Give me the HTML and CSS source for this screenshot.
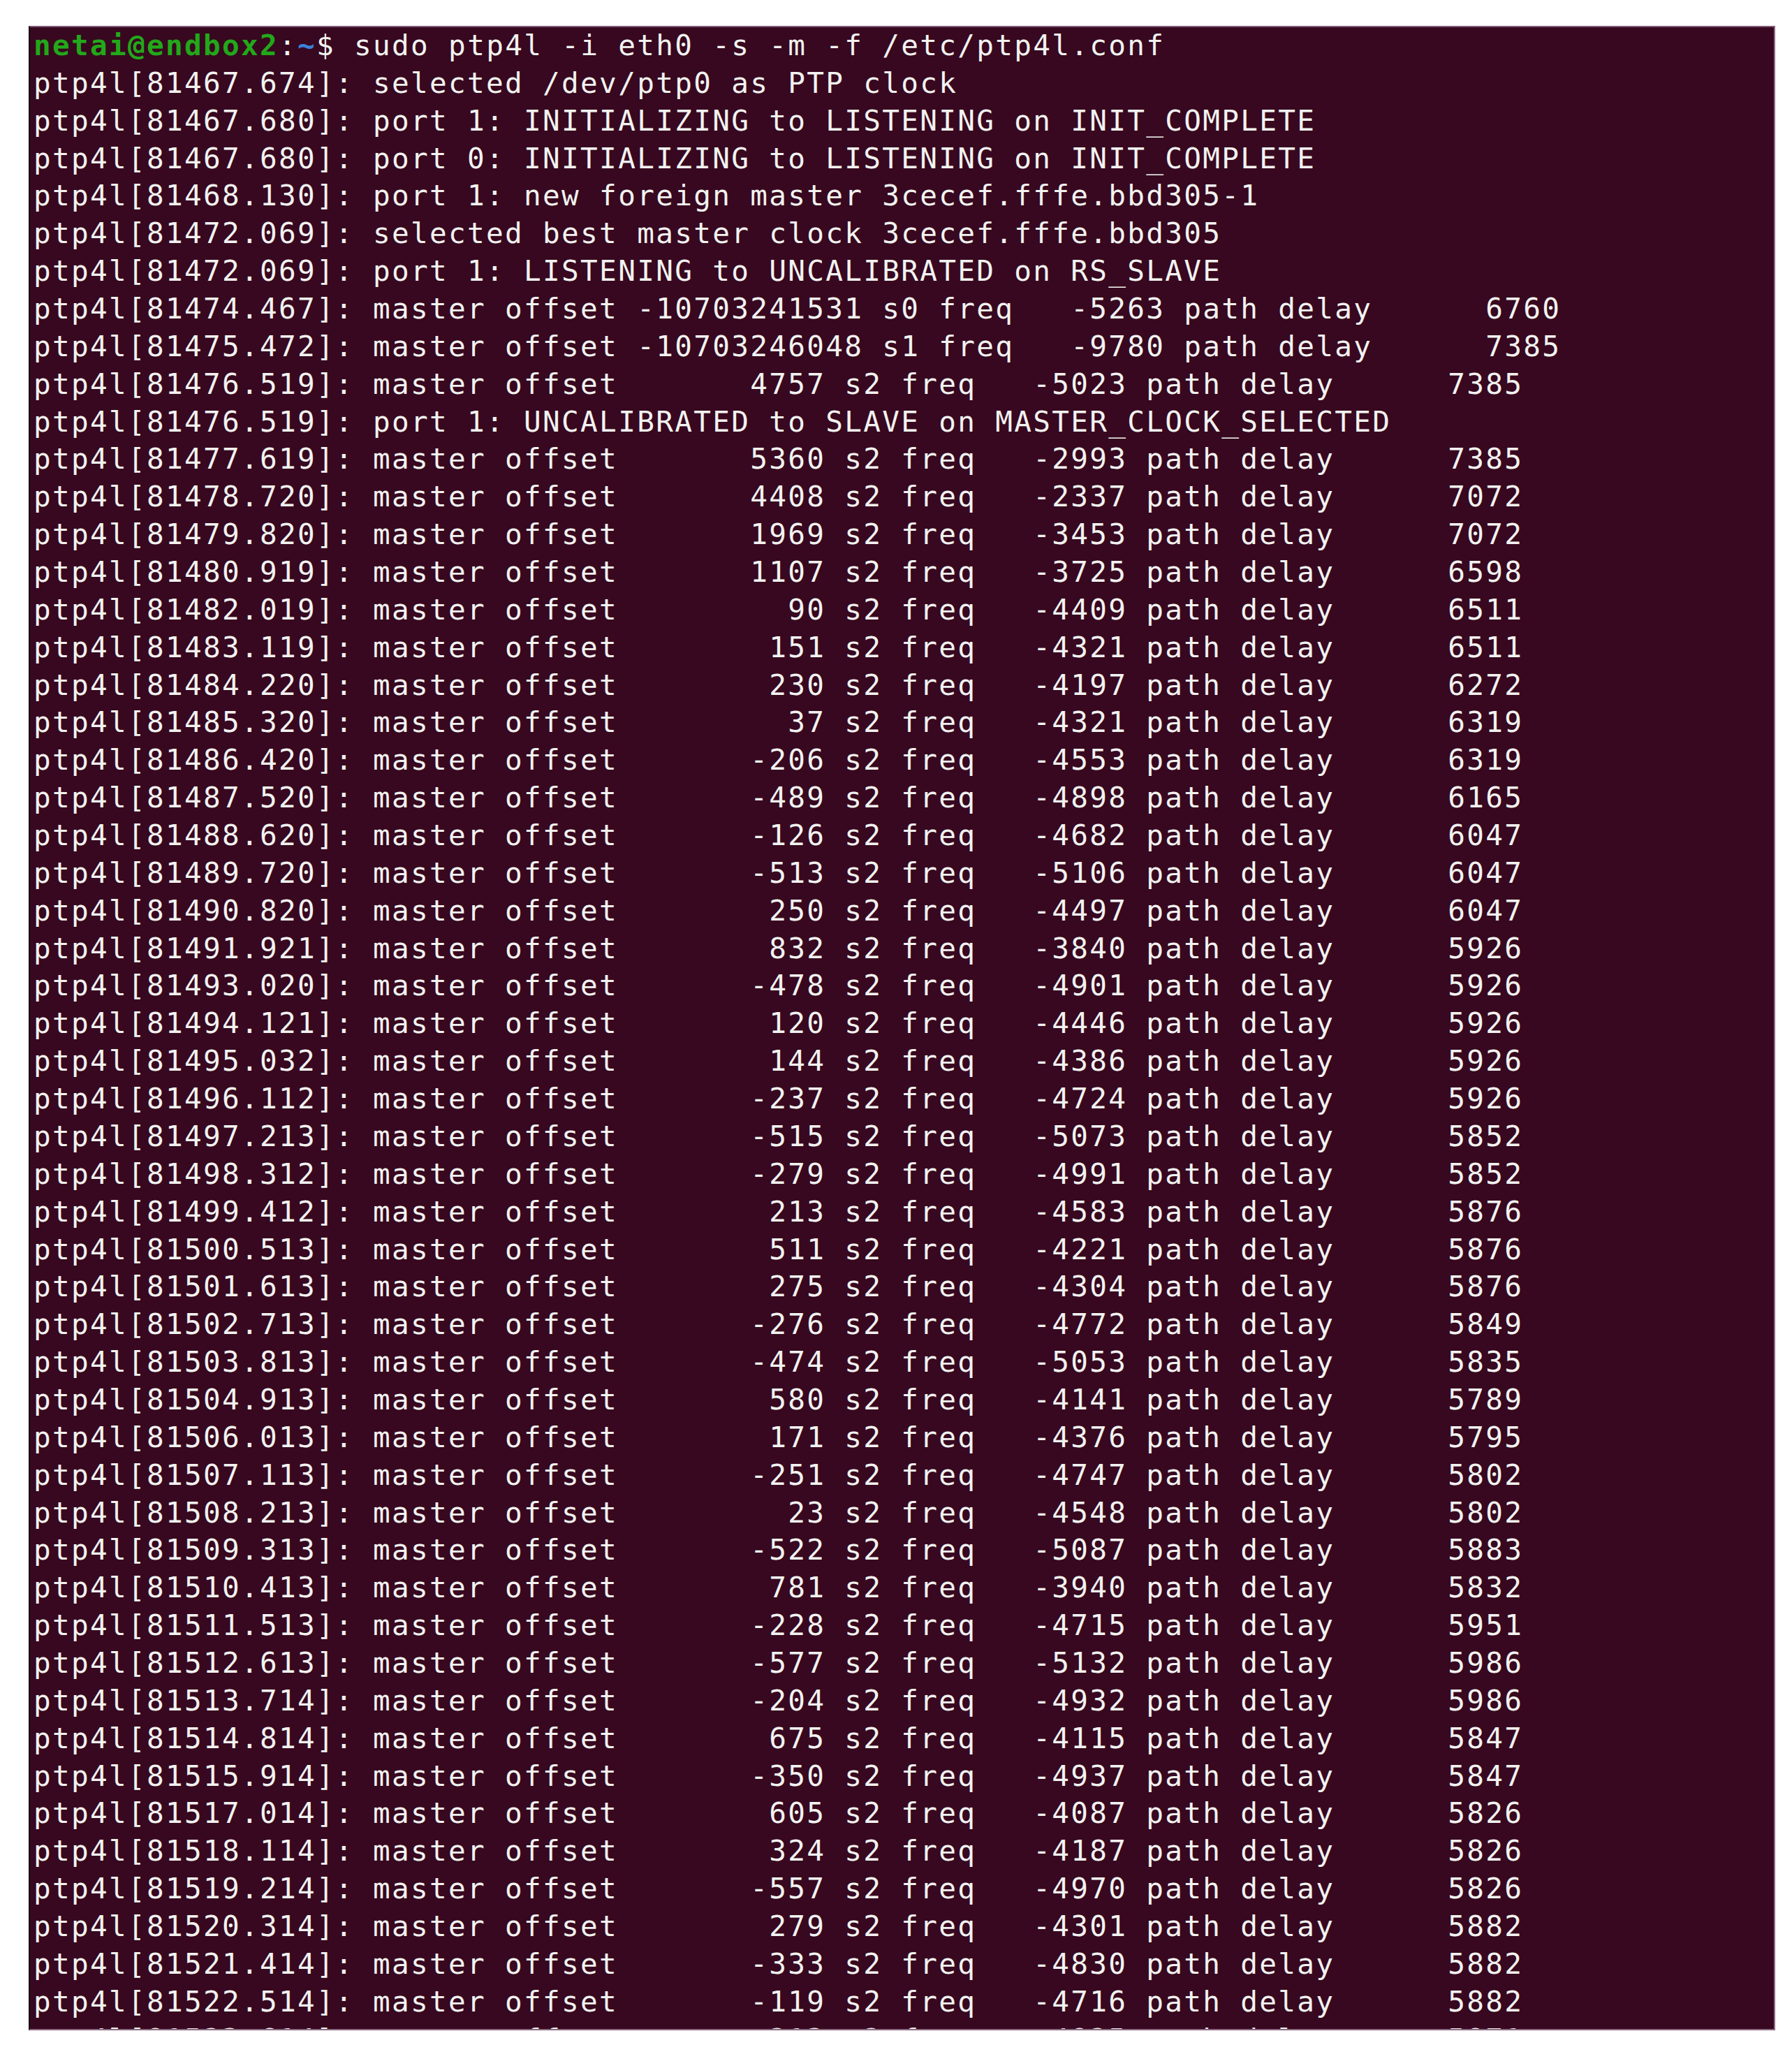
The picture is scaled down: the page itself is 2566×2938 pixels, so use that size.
FILE: index.html
```html
<!DOCTYPE html>
<html lang="en">
<head>
<meta charset="utf-8">
<title>ptp4l</title>
<link rel="stylesheet" href="styles.css">
</head>
<body>
<div class="terminal">
<div class="screen">
<div class="line"><span class="user">netai@endbox2</span>:<span class="path">~</span>$ sudo ptp4l -i eth0 -s -m -f /etc/ptp4l.conf</div>
<div class="line">ptp4l[81467.674]: selected /dev/ptp0 as PTP clock</div>
<div class="line">ptp4l[81467.680]: port 1: INITIALIZING to LISTENING on INIT_COMPLETE</div>
<div class="line">ptp4l[81467.680]: port 0: INITIALIZING to LISTENING on INIT_COMPLETE</div>
<div class="line">ptp4l[81468.130]: port 1: new foreign master 3cecef.fffe.bbd305-1</div>
<div class="line">ptp4l[81472.069]: selected best master clock 3cecef.fffe.bbd305</div>
<div class="line">ptp4l[81472.069]: port 1: LISTENING to UNCALIBRATED on RS_SLAVE</div>
<div class="line">ptp4l[81474.467]: master offset -10703241531 s0 freq   -5263 path delay      6760</div>
<div class="line">ptp4l[81475.472]: master offset -10703246048 s1 freq   -9780 path delay      7385</div>
<div class="line">ptp4l[81476.519]: master offset       4757 s2 freq   -5023 path delay      7385</div>
<div class="line">ptp4l[81476.519]: port 1: UNCALIBRATED to SLAVE on MASTER_CLOCK_SELECTED</div>
<div class="line">ptp4l[81477.619]: master offset       5360 s2 freq   -2993 path delay      7385</div>
<div class="line">ptp4l[81478.720]: master offset       4408 s2 freq   -2337 path delay      7072</div>
<div class="line">ptp4l[81479.820]: master offset       1969 s2 freq   -3453 path delay      7072</div>
<div class="line">ptp4l[81480.919]: master offset       1107 s2 freq   -3725 path delay      6598</div>
<div class="line">ptp4l[81482.019]: master offset         90 s2 freq   -4409 path delay      6511</div>
<div class="line">ptp4l[81483.119]: master offset        151 s2 freq   -4321 path delay      6511</div>
<div class="line">ptp4l[81484.220]: master offset        230 s2 freq   -4197 path delay      6272</div>
<div class="line">ptp4l[81485.320]: master offset         37 s2 freq   -4321 path delay      6319</div>
<div class="line">ptp4l[81486.420]: master offset       -206 s2 freq   -4553 path delay      6319</div>
<div class="line">ptp4l[81487.520]: master offset       -489 s2 freq   -4898 path delay      6165</div>
<div class="line">ptp4l[81488.620]: master offset       -126 s2 freq   -4682 path delay      6047</div>
<div class="line">ptp4l[81489.720]: master offset       -513 s2 freq   -5106 path delay      6047</div>
<div class="line">ptp4l[81490.820]: master offset        250 s2 freq   -4497 path delay      6047</div>
<div class="line">ptp4l[81491.921]: master offset        832 s2 freq   -3840 path delay      5926</div>
<div class="line">ptp4l[81493.020]: master offset       -478 s2 freq   -4901 path delay      5926</div>
<div class="line">ptp4l[81494.121]: master offset        120 s2 freq   -4446 path delay      5926</div>
<div class="line">ptp4l[81495.032]: master offset        144 s2 freq   -4386 path delay      5926</div>
<div class="line">ptp4l[81496.112]: master offset       -237 s2 freq   -4724 path delay      5926</div>
<div class="line">ptp4l[81497.213]: master offset       -515 s2 freq   -5073 path delay      5852</div>
<div class="line">ptp4l[81498.312]: master offset       -279 s2 freq   -4991 path delay      5852</div>
<div class="line">ptp4l[81499.412]: master offset        213 s2 freq   -4583 path delay      5876</div>
<div class="line">ptp4l[81500.513]: master offset        511 s2 freq   -4221 path delay      5876</div>
<div class="line">ptp4l[81501.613]: master offset        275 s2 freq   -4304 path delay      5876</div>
<div class="line">ptp4l[81502.713]: master offset       -276 s2 freq   -4772 path delay      5849</div>
<div class="line">ptp4l[81503.813]: master offset       -474 s2 freq   -5053 path delay      5835</div>
<div class="line">ptp4l[81504.913]: master offset        580 s2 freq   -4141 path delay      5789</div>
<div class="line">ptp4l[81506.013]: master offset        171 s2 freq   -4376 path delay      5795</div>
<div class="line">ptp4l[81507.113]: master offset       -251 s2 freq   -4747 path delay      5802</div>
<div class="line">ptp4l[81508.213]: master offset         23 s2 freq   -4548 path delay      5802</div>
<div class="line">ptp4l[81509.313]: master offset       -522 s2 freq   -5087 path delay      5883</div>
<div class="line">ptp4l[81510.413]: master offset        781 s2 freq   -3940 path delay      5832</div>
<div class="line">ptp4l[81511.513]: master offset       -228 s2 freq   -4715 path delay      5951</div>
<div class="line">ptp4l[81512.613]: master offset       -577 s2 freq   -5132 path delay      5986</div>
<div class="line">ptp4l[81513.714]: master offset       -204 s2 freq   -4932 path delay      5986</div>
<div class="line">ptp4l[81514.814]: master offset        675 s2 freq   -4115 path delay      5847</div>
<div class="line">ptp4l[81515.914]: master offset       -350 s2 freq   -4937 path delay      5847</div>
<div class="line">ptp4l[81517.014]: master offset        605 s2 freq   -4087 path delay      5826</div>
<div class="line">ptp4l[81518.114]: master offset        324 s2 freq   -4187 path delay      5826</div>
<div class="line">ptp4l[81519.214]: master offset       -557 s2 freq   -4970 path delay      5826</div>
<div class="line">ptp4l[81520.314]: master offset        279 s2 freq   -4301 path delay      5882</div>
<div class="line">ptp4l[81521.414]: master offset       -333 s2 freq   -4830 path delay      5882</div>
<div class="line">ptp4l[81522.514]: master offset       -119 s2 freq   -4716 path delay      5882</div>
<div class="line">ptp4l[81523.614]: master offset       -213 s2 freq   -4825 path delay      5871</div>
</div>
</div>
</body>
</html>
```

FILE: styles.css
```css
html, body {
  margin: 0;
  padding: 0;
  background: #ffffff;
}

body {
  padding: 37px 0 0 41px;
}

.terminal {
  width: 2497px;
  height: 2866px;
  background: #37081f;
  border-top: 2px solid #7e5a74;
  border-right: 2px solid #8a6a82;
  border-bottom: 2px solid #8a6a82;
  border-left: 2px solid #14040c;
  overflow: hidden;
}

.screen {
  padding: 0 0 0 5px;
  font-family: "DejaVu Sans Mono", "Liberation Mono", monospace;
  font-size: 41px;
  line-height: 53.86px;
  letter-spacing: 2.32px;
  color: #f2f2f0;
}

.line {
  white-space: pre;
  height: 53.86px;
}

.user {
  color: #22a81a;
  font-weight: bold;
}

.path {
  color: #3b82d8;
  font-weight: bold;
}
```
